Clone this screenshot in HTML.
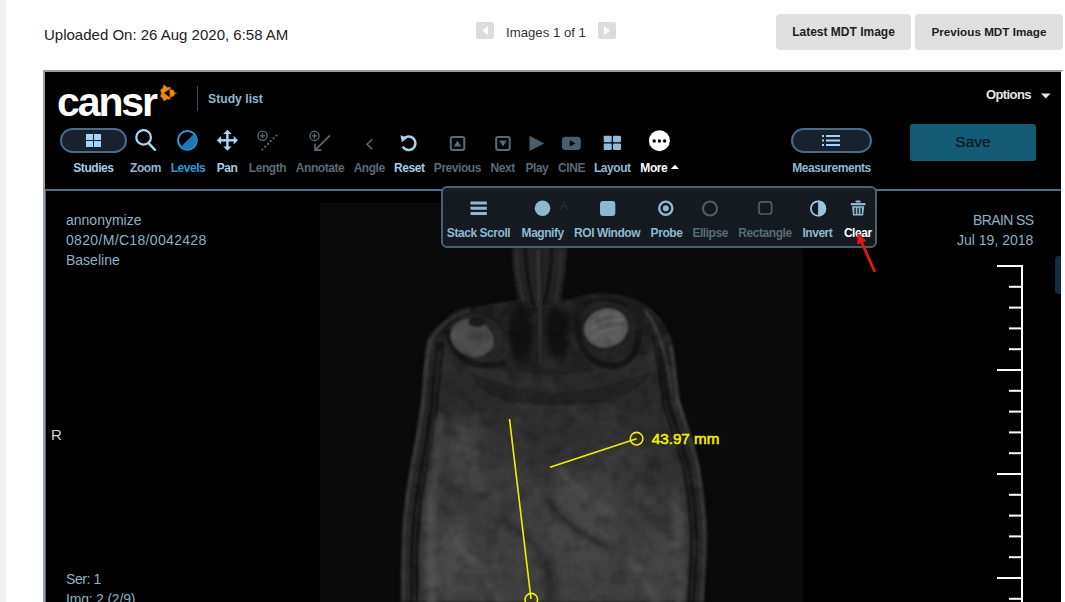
<!DOCTYPE html>
<html><head><meta charset="utf-8">
<style>
*{box-sizing:border-box;margin:0;padding:0}
html,body{width:1065px;height:602px;overflow:hidden;background:#fff;font-family:"Liberation Sans",sans-serif}
.abs{position:absolute}
#strip{left:0;top:0;width:6px;height:602px;background:#f2f2f2}
#upl{left:44px;top:26px;font-size:15px;color:#222;white-space:nowrap}
.pgbox{top:22px;width:18px;height:17px;background:#dcdcdc;border-radius:2px}
#imgs{left:506px;top:25px;font-size:13.2px;color:#333;white-space:nowrap}
.btn{top:14px;height:36px;background:#e0e0e0;border-radius:4px;font-weight:bold;font-size:12px;color:#222;text-align:center;line-height:36px;white-space:nowrap}
#cont{left:43px;top:70px;width:1020px;height:540px;border-top:2px solid #9a9a9a;border-left:2px solid #9a9a9a;border-right:2px solid #fff;background:#000;overflow:hidden}
#logo{left:57px;top:79px;font-size:41px;font-weight:bold;color:#fff;letter-spacing:-2.1px;white-space:nowrap;line-height:46px}
#sep{left:197px;top:86px;width:1px;height:25px;background:#3e4a55}
#studylist{left:208px;top:92px;font-size:12.2px;font-weight:bold;color:#8fb8d0;white-space:nowrap}
#options{left:986px;top:87px;font-size:13px;font-weight:bold;color:#e6e6e6;white-space:nowrap;letter-spacing:-0.6px}
.lbl{top:161px;font-size:12px;font-weight:bold;white-space:nowrap;letter-spacing:-0.45px;transform:translateX(-50%)}
.c1{color:#8fb8d0}.c2{color:#5a6a76}.c3{color:#2e9bd6}.cw{color:#fff}.c4{color:#a9cce3}
.pill{top:128px;height:25px;border:2px solid #4a6a88;background:#17222e;border-radius:13px}
#save{left:910px;top:124px;width:126px;height:37px;background:#135a75;border-radius:3px;color:#0b1c26;font-size:15.5px;text-align:center;line-height:35px;font-weight:normal;letter-spacing:0px;text-shadow:0 0 0.3px #0b1c26}
#vline{left:45px;top:189px;width:1016px;height:2px;background:#4a6f94}
#vleft{left:45px;top:189px;width:1px;height:420px;background:#4a6f94}
#popup{left:441px;top:186px;width:436px;height:62px;border:2px solid #4a6070;border-radius:6px;background:rgba(21,27,33,0.96)}
.plbl{top:226px;font-size:12px;font-weight:bold;white-space:nowrap;letter-spacing:-0.45px;transform:translateX(-50%)}
.ov{font-size:14px;color:#8fb1c6;white-space:nowrap}
svg{position:absolute;left:0;top:0;overflow:visible}
</style></head><body>
<div id="strip" class="abs"></div>
<div id="upl" class="abs">Uploaded On: 26 Aug 2020, 6:58 AM</div>
<div class="abs pgbox" style="left:476px"></div>
<div id="imgs" class="abs">Images 1 of 1</div>
<div class="abs pgbox" style="left:598px"></div>
<div class="abs btn" style="left:776px;width:135px">Latest MDT Image</div>
<div class="abs btn" style="left:915px;width:148px;font-size:11.7px">Previous MDT Image</div>

<div id="cont" class="abs"></div>

<!-- MRI -->
<svg class="abs" width="1065" height="602" style="left:0;top:0">
<defs>
<filter id="b1" x="-20%" y="-20%" width="140%" height="140%"><feGaussianBlur stdDeviation="1.2"/></filter>
<filter id="b2" x="-100%" y="-50%" width="300%" height="200%"><feGaussianBlur stdDeviation="3"/></filter>
<filter id="b3" x="-50%" y="-50%" width="200%" height="200%"><feGaussianBlur stdDeviation="8"/></filter>
<filter id="tex" x="0" y="0" width="100%" height="100%" filterUnits="userSpaceOnUse"><feTurbulence type="fractalNoise" baseFrequency="0.045" numOctaves="3" seed="7" result="n"/><feColorMatrix in="n" type="matrix" values="0 0 0 0 1  0 0 0 0 1  0 0 0 0 1  1.6 0 0 0 -0.75" result="a"/><feComposite in="a" in2="SourceGraphic" operator="in"/></filter>
<filter id="tex2" x="0" y="0" width="100%" height="100%" filterUnits="userSpaceOnUse"><feTurbulence type="fractalNoise" baseFrequency="0.07" numOctaves="2" seed="3" result="n"/><feColorMatrix in="n" type="matrix" values="0 0 0 0 0  0 0 0 0 0  0 0 0 0 0  0 1.8 0 0 -0.8" result="a"/><feComposite in="a" in2="SourceGraphic" operator="in"/></filter>
<clipPath id="hclip"><path d="M426 335 C423 360 423 380 421 400 C418 425 414 445 410 467 C406 490 403 512 402 534 C401 560 401 580 401 602 L704 602 C705 580 707 560 707 534 C706 510 704 490 700 467 C694 440 686 420 680 400 C677 380 676 360 673 345 C668 322 652 305 632 298 C614 292 596 292 580 296 L500 303 C470 306 440 318 426 335 Z"/></clipPath>
<clipPath id="mclip"><rect x="320" y="203" width="483" height="399"/></clipPath>
<linearGradient id="hg" x1="0" y1="290" x2="0" y2="602" gradientUnits="userSpaceOnUse"><stop offset="0" stop-color="#1c1c1c"/><stop offset="0.4" stop-color="#262626"/><stop offset="1" stop-color="#2c2c2c"/></linearGradient>
<radialGradient id="dk"><stop offset="0" stop-color="#101010" stop-opacity="1"/><stop offset="0.55" stop-color="#101010" stop-opacity="0.9"/><stop offset="1" stop-color="#101010" stop-opacity="0"/></radialGradient>
<radialGradient id="bg1" cx="0.5" cy="0.9" r="0.75"><stop offset="0" stop-color="#444"/><stop offset="0.6" stop-color="#383838"/><stop offset="1" stop-color="#2a2a2a"/></radialGradient>
</defs>
<g clip-path="url(#mclip)">
<rect x="320" y="203" width="483" height="399" fill="#0a0a0a"/>
<g filter="url(#b1)">
<!-- outer head -->
<path d="M512 247 C512 268 515 286 518 300 C505 302 490 304 474 307 C452 311 432 325 426 345 C423 365 423 382 421 400 C418 425 414 445 410 467 C406 490 403 512 402 534 C401 560 401 580 401 602 L704 602 C705 580 707 560 707 534 C706 510 704 490 700 467 C694 440 686 420 680 400 C677 380 676 360 673 345 C668 322 652 305 632 298 C614 292 596 292 580 296 C573 298 567 300 561 302 C563 288 567 268 567 247 Z" fill="url(#hg)"/>
<!-- brain fill -->
<path d="M440 345 C437 370 436 390 434 410 C431 435 427 455 423 476 C419 498 417 518 417 540 C416 562 416 582 416 602 L690 602 C691 582 693 562 693 540 C692 515 690 495 686 474 C680 450 673 430 667 410 C663 390 661 370 657 350 C620 365 590 375 550 375 C510 375 475 365 440 345 Z" fill="url(#bg1)"/>
<!-- dark gap (sides) -->
<path d="M440 342 C437 365 436 385 434 405 C431 430 427 450 423 472 C419 495 416 515 415 537 C414 560 414 580 414 602" fill="none" stroke="#131313" stroke-width="9"/>
<path d="M691 602 C692 580 694 560 694 537 C693 512 691 492 687 470 C681 445 673 425 667 405 C663 385 661 365 658 345" fill="none" stroke="#131313" stroke-width="9"/>
<path d="M440 350 C437 370 436 390 434 410 C431 435 427 455 423 476 C419 498 416 518 415 540 C414 562 414 582 414 602" fill="none" stroke="#2c2c2c" stroke-width="1.4"/>
<path d="M691 602 C692 582 694 562 694 540 C693 515 691 495 687 474 C681 450 673 430 667 410 C663 390 661 370 658 352" fill="none" stroke="#2c2c2c" stroke-width="1.4"/>
<!-- scalp rim highlight -->
<path d="M431 338 C426 360 426 380 424 400 C421 425 417 445 413 467 C409 490 406 512 405 534 C404 560 404 580 404 602" fill="none" stroke="#393939" stroke-width="5"/>
<path d="M701 602 C702 580 704 560 704 534 C703 510 701 490 697 467 C691 440 683 420 677 400 C674 380 673 360 670 345" fill="none" stroke="#373737" stroke-width="5"/>
<path d="M433 340 C428 360 428 380 426 400 C423 425 419 445 415 467 C411 490 408 512 407 534 C406 560 406 580 406 602" fill="none" stroke="#1c1c1c" stroke-width="1"/>
<path d="M699 602 C700 580 702 560 702 534 C701 510 699 490 695 467 C689 440 681 420 675 400 C672 380 671 360 668 345" fill="none" stroke="#1c1c1c" stroke-width="1"/>
<!-- nose -->
<path d="M513 247 C513 270 518 290 524 308 L554 308 C560 290 566 270 566 247 Z" fill="#242424"/>
<path d="M525 247 C526 270 529 290 534 306" stroke="#101010" stroke-width="3" fill="none"/>
<path d="M552 247 C551 270 548 290 544 306" stroke="#101010" stroke-width="3" fill="none"/>
<path d="M538 250 C538 270 539 290 539 306" stroke="#363636" stroke-width="3" fill="none"/>
<path d="M517 250 C517 270 520 290 524 304" stroke="#303030" stroke-width="2" fill="none"/>
<path d="M561 250 C561 270 558 290 555 304" stroke="#303030" stroke-width="2" fill="none"/>
<!-- orbits -->
<ellipse cx="474" cy="340" rx="29" ry="26" fill="#262626"/>
<ellipse cx="606" cy="333" rx="31" ry="31" fill="#242424"/>
<path d="M447 330 C452 360 480 372 505 362" stroke="#121212" stroke-width="6" fill="none"/>
<path d="M446 325 C450 312 462 307 475 309" stroke="#161616" stroke-width="4" fill="none"/>
<path d="M578 320 C575 345 590 365 612 366 C630 366 640 350 638 330" stroke="#131313" stroke-width="6" fill="none"/>
<path d="M583 305 C595 298 615 298 628 306" stroke="#181818" stroke-width="4" fill="none"/>
<ellipse cx="472" cy="338" rx="22" ry="18" fill="#4e4e4e" transform="rotate(25 472 338)"/>
<ellipse cx="606" cy="328" rx="22" ry="19" fill="#5a5a5a" transform="rotate(-15 606 328)"/>
<g stroke="#6c6c6c" stroke-width="2" fill="none" opacity="0.8"><path d="M592 322 C600 315 612 312 620 314"/><path d="M590 330 C600 322 615 318 624 320"/><path d="M592 338 C602 330 616 326 622 328"/></g>
<ellipse cx="477" cy="322" rx="9" ry="5" fill="#1a1a1a"/>
<g fill="none" stroke-width="3"><path d="M645 310 C660 330 668 360 672 395" stroke="#343434"/><path d="M652 335 C658 355 662 375 664 400" stroke="#151515"/><path d="M428 348 C434 330 450 316 470 310" stroke="#333"/></g>
<path d="M470 372 C500 385 530 392 555 392 C590 392 620 382 650 372 C640 395 610 405 555 405 C500 405 480 395 470 372 Z" fill="#242424"/>
</g>
<ellipse cx="521" cy="335" rx="15" ry="36" fill="url(#dk)"/>
<ellipse cx="558" cy="332" rx="15" ry="36" fill="url(#dk)"/>
<path d="M539 300 C539 320 540 340 541 365" stroke="#2a2a2a" stroke-width="6" fill="none" filter="url(#b1)"/>
<!-- soft patches -->
<g filter="url(#b3)" opacity="0.7">
<ellipse cx="452" cy="560" rx="22" ry="40" fill="#505050"/>
<ellipse cx="658" cy="565" rx="20" ry="35" fill="#4a4a4a"/>
<ellipse cx="585" cy="525" rx="35" ry="45" fill="#4a4a4a"/>
<ellipse cx="462" cy="450" rx="20" ry="35" fill="#484848"/>
<ellipse cx="550" cy="440" rx="40" ry="30" fill="#2f2f2f"/>
<ellipse cx="550" cy="590" rx="12" ry="30" fill="#303030"/>
</g>
<g filter="url(#b2)" fill="none" stroke-linecap="round">
<path d="M432 490 C430 530 430 570 432 602" stroke="#505050" stroke-width="10"/>
<path d="M676 490 C679 530 680 570 678 602" stroke="#4c4c4c" stroke-width="9"/>
<path d="M440 420 C438 450 436 470 434 490" stroke="#444" stroke-width="8"/>
<path d="M548 500 C560 520 590 540 610 548" stroke="#222" stroke-width="5"/>
<path d="M500 520 C520 530 535 545 545 560" stroke="#262626" stroke-width="4"/>
<path d="M560 470 C575 490 595 505 620 520" stroke="#4e4e4e" stroke-width="6"/>
<path d="M455 540 C470 560 490 575 500 600" stroke="#565656" stroke-width="5"/>
<path d="M630 560 C640 575 650 590 655 602" stroke="#525252" stroke-width="5"/>
<path d="M548 565 L550 602" stroke="#262626" stroke-width="6"/>
<path d="M445 480 C470 475 490 490 500 500" stroke="#4a4a4a" stroke-width="3"/>
<path d="M460 430 C470 445 480 460 470 480" stroke="#4a4a4a" stroke-width="3"/>
<path d="M640 430 C650 450 660 470 650 490" stroke="#262626" stroke-width="3"/>
</g>
<g clip-path="url(#hclip)">
<rect x="400" y="290" width="310" height="312" fill="#fff" filter="url(#tex)" opacity="0.07"/>
<rect x="400" y="290" width="310" height="312" fill="#000" filter="url(#tex2)" opacity="0.25"/>
</g>
</g>
</svg>

<div id="logo" class="abs">cansr</div>
<div id="sep" class="abs"></div>
<div id="studylist" class="abs">Study list</div>
<div id="options" class="abs">Options</div>

<div class="abs pill" style="left:60px;width:67px"></div>
<div class="abs pill" style="left:791px;width:81px"></div>

<div class="abs lbl c4" style="left:93.4px">Studies</div>
<div class="abs lbl c1" style="left:145.5px">Zoom</div>
<div class="abs lbl c3" style="left:188px">Levels</div>
<div class="abs lbl c4" style="left:227px">Pan</div>
<div class="abs lbl c2" style="left:267.5px">Length</div>
<div class="abs lbl c2" style="left:320px">Annotate</div>
<div class="abs lbl c2" style="left:369.2px">Angle</div>
<div class="abs lbl c4" style="left:409.3px">Reset</div>
<div class="abs lbl c2" style="left:457.4px">Previous</div>
<div class="abs lbl c2" style="left:502.7px">Next</div>
<div class="abs lbl c2" style="left:536.9px">Play</div>
<div class="abs lbl c2" style="left:571.5px">CINE</div>
<div class="abs lbl c1" style="left:612.3px">Layout</div>
<div class="abs lbl cw" style="left:653.8px">More</div>
<div class="abs lbl c1" style="left:831.5px">Measurements</div>


<svg class="abs" width="1065" height="602" style="left:0;top:0">
<!-- pager arrows -->
<path d="M482 30.5 L488 26 L488 35 Z" fill="#fff"/>
<path d="M604 26 L610 30.5 L604 35 Z" fill="#fff"/>
<!-- Options caret -->
<path d="M1041 93.5 L1050.5 93.5 L1045.75 98.5 Z" fill="#e6e6e6"/>
<!-- logo mark -->
<path d="M163.8 84.6 L167.5 87.4 L170 86.8 L170.8 89.5 L173.8 90.3 L174.5 92.5 L177 93 L174.5 94 L173.8 96.2 L170.8 97 L170 99.7 L167.5 99.1 L163.8 101.2 L162.5 98.2 L160.3 96.5 L161.3 93.2 L160.3 90 L162.5 88.3 Z M163.9 93 L169.6 89.2 L169.8 97.2 Z" fill="#e98c08" fill-rule="evenodd" stroke="#9a3a08" stroke-width="0.4"/>
<!-- Studies grid -->
<g fill="#a3d2fa"><rect x="86" y="134" width="7" height="6"/><rect x="94" y="134" width="7" height="6"/><rect x="86" y="141" width="7" height="6"/><rect x="94" y="141" width="7" height="6"/></g>
<!-- Zoom -->
<g stroke="#a8d8f8" fill="none" stroke-width="2.2"><circle cx="143.6" cy="137.4" r="7.3"/><path d="M148.8 143.4 L155 149.8" stroke-linecap="round" stroke-width="2.4"/></g>
<!-- Levels -->
<circle cx="187.4" cy="140.3" r="9.4" fill="none" stroke="#2e9bd6" stroke-width="2"/>
<path d="M194.05 133.65 A9.4 9.4 0 0 1 180.75 146.95 Z" fill="#1a7ab5"/>
<!-- Pan -->
<g fill="#a8d8f8"><rect x="226.2" y="132" width="2.4" height="17"/><rect x="219" y="139.1" width="17" height="2.4"/>
<path d="M227.4 129.8 L223.2 134 L231.6 134 Z M227.4 150.8 L223.2 146.6 L231.6 146.6 Z M216.9 140.3 L221.1 136.1 L221.1 144.5 Z M237.9 140.3 L233.7 136.1 L233.7 144.5 Z"/></g>
<!-- Length -->
<g stroke="#5a6a76" fill="none" stroke-width="1.3"><circle cx="262.5" cy="135.8" r="4.6"/><path d="M260 135.8 H265 M262.5 133.3 V138.3"/></g>
<g fill="#5a6a76"><circle cx="262.4" cy="149.6" r="1.1"/><circle cx="265.2" cy="146.7" r="1.1"/><circle cx="268" cy="143.9" r="1.1"/><circle cx="270.8" cy="141.1" r="1.1"/><circle cx="273.6" cy="138.3" r="1.1"/><circle cx="276.5" cy="135.5" r="1.1"/></g>
<!-- Annotate -->
<g stroke="#5a6a76" fill="none" stroke-width="1.3"><circle cx="314.5" cy="135.9" r="4.6"/><path d="M312 135.9 H317 M314.5 133.4 V138.4"/></g>
<g stroke="#5a6a76" fill="none" stroke-width="1.7"><path d="M330 135.3 L315 150.2 M315 143.8 V150.2 H321.4"/></g>
<!-- Angle -->
<path d="M372.3 139.3 L367 144.2 L372.3 149.1" stroke="#5a6a76" stroke-width="1.5" fill="none"/>
<!-- Reset -->
<path d="M403.2 139.2 A6.8 6.8 0 1 1 402.7 146.5" stroke="#a8d0e8" stroke-width="2.6" fill="none"/>
<path d="M400.5 135.2 L407.5 137.8 L401.8 142.3 Z" fill="#a8d0e8"/>
<!-- Previous / Next -->
<rect x="450.8" y="136.9" width="13.5" height="13" rx="1.8" stroke="#5a6a76" stroke-width="2" fill="none"/>
<path d="M453.8 146.4 L457.5 140.6 L461.2 146.4 Z" fill="#5a6a76"/>
<rect x="496.2" y="136.9" width="13.5" height="13" rx="1.8" stroke="#5a6a76" stroke-width="2" fill="none"/>
<path d="M499.2 140.6 L506.7 140.6 L502.95 146.4 Z" fill="#5a6a76"/>
<!-- Play -->
<path d="M529.5 135.8 L544.3 143.4 L529.5 151.1 Z" fill="#4a5d6a"/>
<!-- CINE -->
<rect x="562" y="136.8" width="18.8" height="13.2" rx="3.5" fill="#4a5d6a"/>
<path d="M569.8 140.2 L575.6 143.4 L569.8 146.6 Z" fill="#000"/>
<!-- Layout -->
<g fill="#8fbcd8"><rect x="603.7" y="135.8" width="8" height="6.4" rx="1"/><rect x="613" y="135.8" width="8" height="6.4" rx="1"/><rect x="603.7" y="143.6" width="8" height="6.4" rx="1"/><rect x="613" y="143.6" width="8" height="6.4" rx="1"/></g>
<!-- More -->
<circle cx="659.4" cy="140.7" r="10.5" fill="#fff"/>
<g fill="#000"><circle cx="654.2" cy="141" r="1.7"/><circle cx="659.4" cy="141" r="1.7"/><circle cx="664.6" cy="141" r="1.7"/></g>
<path d="M670.8 169 L674.9 164.8 L679 169 Z" fill="#fff"/>
<!-- Measurements list icon -->
<g fill="#a3d2fa"><rect x="822" y="135" width="2" height="2"/><rect x="822" y="139.5" width="2" height="2"/><rect x="822" y="144" width="2" height="2"/><rect x="826" y="135" width="14" height="2"/><rect x="826" y="139.5" width="14" height="2"/><rect x="826" y="144" width="14" height="2"/></g>
</svg>

<div id="save" class="abs">Save</div>

<div id="vline" class="abs"></div>
<div id="vleft" class="abs"></div>

<div class="abs ov" style="left:66px;top:212px">annonymize</div>
<div class="abs ov" style="left:66px;top:232px;letter-spacing:0.33px">0820/M/C18/0042428</div>
<div class="abs ov" style="left:66px;top:252px">Baseline</div>
<div class="abs ov" style="left:51px;top:426px;color:#d0d0d0;font-size:15px">R</div>
<div class="abs ov" style="left:66px;top:571px;letter-spacing:-0.4px">Ser: 1</div>
<div class="abs ov" style="left:66px;top:591px;letter-spacing:-0.2px">Img: 2 (2/9)</div>
<div class="abs ov" style="left:973px;top:212px;letter-spacing:-0.6px">BRAIN SS</div>
<div class="abs ov" style="left:957px;top:232px">Jul 19, 2018</div>

<svg class="abs" width="1065" height="602" style="left:0;top:0">
<g stroke="#f2f000" fill="none" stroke-width="1.6">
<path d="M509.5 419 L531 599"/>
<circle cx="531.3" cy="599.7" r="6.3"/>
<path d="M550 467.3 L636.6 438.7"/>
<circle cx="636.6" cy="438.7" r="6.3"/>
</g>
<text x="651.8" y="443.5" font-family="Liberation Sans" font-size="15.2" fill="#f2f000" stroke="#f2f000" stroke-width="0.55">43.97 mm</text>
<path d="M997 266 H1022 V602" fill="none" stroke="#fff" stroke-width="2"/>
<path d="M1009 286.8 H1022" stroke="#fff" stroke-width="2"/>
<path d="M1009 307.6 H1022" stroke="#fff" stroke-width="2"/>
<path d="M1009 328.4 H1022" stroke="#fff" stroke-width="2"/>
<path d="M1009 349.2 H1022" stroke="#fff" stroke-width="2"/>
<path d="M997 370.0 H1022" stroke="#fff" stroke-width="2"/>
<path d="M1009 390.8 H1022" stroke="#fff" stroke-width="2"/>
<path d="M1009 411.6 H1022" stroke="#fff" stroke-width="2"/>
<path d="M1009 432.4 H1022" stroke="#fff" stroke-width="2"/>
<path d="M1009 453.2 H1022" stroke="#fff" stroke-width="2"/>
<path d="M997 474.0 H1022" stroke="#fff" stroke-width="2"/>
<path d="M1009 494.8 H1022" stroke="#fff" stroke-width="2"/>
<path d="M1009 515.6 H1022" stroke="#fff" stroke-width="2"/>
<path d="M1009 536.4 H1022" stroke="#fff" stroke-width="2"/>
<path d="M1009 557.2 H1022" stroke="#fff" stroke-width="2"/>
<path d="M997 578.0 H1022" stroke="#fff" stroke-width="2"/>
<path d="M1009 598.8 H1022" stroke="#fff" stroke-width="2"/>
<path d="M1061 256 H1059 Q1055 256 1055 260 V290 Q1055 294 1059 294 H1061 Z" fill="#142c42"/>
</svg>
<div id="popup" class="abs"></div>

<svg class="abs" width="1065" height="602" style="left:0;top:0">
<text x="564" y="210" font-family="Liberation Sans" font-size="12" fill="#2a2e31" text-anchor="middle">A</text>
<!-- Stack scroll -->
<g fill="#8fb8d0"><rect x="470.5" y="201.5" width="16.4" height="3" rx="0.5"/><rect x="470.5" y="206.8" width="16.4" height="3" rx="0.5"/><rect x="470.5" y="212" width="16.4" height="3" rx="0.5"/></g>
<circle cx="542.5" cy="208.2" r="7.8" fill="#8fb8d0"/>
<rect x="600" y="201" width="15.3" height="15" rx="3" fill="#8fb8d0"/>
<circle cx="665.8" cy="208.2" r="6.6" fill="none" stroke="#8fb8d0" stroke-width="2.4"/>
<circle cx="665.8" cy="208.2" r="3" fill="#8fb8d0"/>
<circle cx="710" cy="208.5" r="7" fill="none" stroke="#4f606c" stroke-width="2"/>
<rect x="759" y="201.8" width="12.6" height="12.2" rx="2.5" fill="none" stroke="#4f606c" stroke-width="1.7"/>
<circle cx="818.1" cy="208.5" r="7.2" fill="none" stroke="#9cc4dc" stroke-width="1.8"/>
<path d="M818.1 200.4 A8.1 8.1 0 0 1 818.1 216.6 Z" fill="#9cc4dc"/>
<!-- trash -->
<g fill="#8fb8d0"><rect x="850.6" y="203" width="15" height="2.2" rx="0.8"/><rect x="855.5" y="200.5" width="5.2" height="2" rx="0.8"/>
<path d="M852 206.2 H864.2 L863.2 215.6 H853 Z M854.4 207.8 V214 H855.8 V207.8 Z M857.4 207.8 V214 H858.8 V207.8 Z M860.4 207.8 V214 H861.8 V207.8 Z" fill-rule="evenodd"/></g>
</svg>
<div class="abs plbl c1" style="left:478.5px">Stack Scroll</div>
<div class="abs plbl c1" style="left:542.7px">Magnify</div>
<div class="abs plbl c1" style="left:607.1px">ROI Window</div>
<div class="abs plbl c1" style="left:666.5px">Probe</div>
<div class="abs plbl c2" style="left:710.2px">Ellipse</div>
<div class="abs plbl c2" style="left:765px">Rectangle</div>
<div class="abs plbl c1" style="left:817.4px">Invert</div>
<div class="abs plbl cw" style="left:857.8px">Clear</div>

<svg class="abs" width="1065" height="602" style="left:0;top:0">
<path d="M874.3 270.8 L861.2 241" stroke="#e8141c" stroke-width="2.8" stroke-linecap="round"/>
<path d="M857.3 232.5 L866.2 240.8 L857.4 244.7 Z" fill="#e8141c"/>
</svg>
</body></html>
